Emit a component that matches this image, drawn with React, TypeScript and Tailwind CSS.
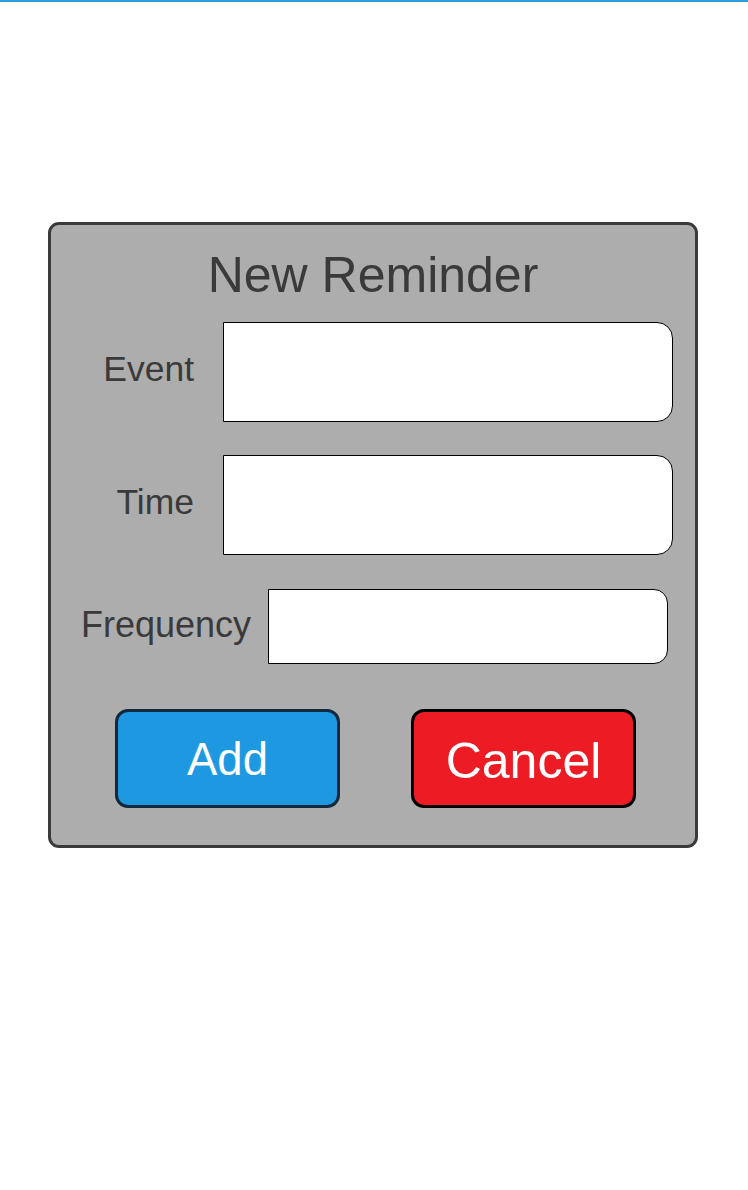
import React from "react";

const font = { fontFamily: '"Liberation Sans", Arial, sans-serif' };

function Field({ label, height }: { label: string; height: string }) {
  return (
    <div className="flex items-center">
      <div className="w-[143px] pb-1 text-right text-[35.5px] leading-none text-[#3a3a3a]">{label}</div>
      <div className={`ml-[29px] w-[450px] ${height} rounded-r-[16px] border border-black bg-white`} />
    </div>
  );
}

export default function App() {
  return (
    <div className="min-h-[1190px] w-[748px] bg-white" style={font}>
      <div className="h-[2px] bg-[#2d9bd5]" />
      <div className="pt-[220px] pl-[48px]">
        <div className="w-[650px] h-[626px] rounded-[11px] border-[3px] border-[#3a3a3a] bg-[#adadad]">
          <div className="pt-[25px] text-center text-[50px] leading-none text-[#3a3a3a]">New Reminder</div>

          <div className="mt-[22px] flex flex-col gap-[33px]">
            <Field label="Event" height="h-[100px]" />
            <Field label="Time" height="h-[100px]" />
          </div>

          <div className="mt-[34px] flex items-center pl-[30px]">
            <div className="w-[187px] pb-1 text-[36px] leading-none text-[#3a3a3a]">Frequency</div>
            <div className="h-[75px] w-[400px] rounded-r-[14px] border border-black bg-white" />
          </div>

          <div className="mt-[45px] flex pl-[64px]">
            <button className="flex h-[99px] w-[225px] items-center justify-center rounded-[13px] border-[3px] border-[#12283c] bg-[#1e98e0] pt-[2px] text-[45.5px] leading-none text-white">
              Add
            </button>
            <button className="ml-[71px] flex h-[99px] w-[225px] items-center justify-center rounded-[13px] border-[3px] border-black bg-[#ed1c24] pt-[4px] text-[50px] leading-none text-white">
              Cancel
            </button>
          </div>
        </div>
      </div>
    </div>
  );
}
